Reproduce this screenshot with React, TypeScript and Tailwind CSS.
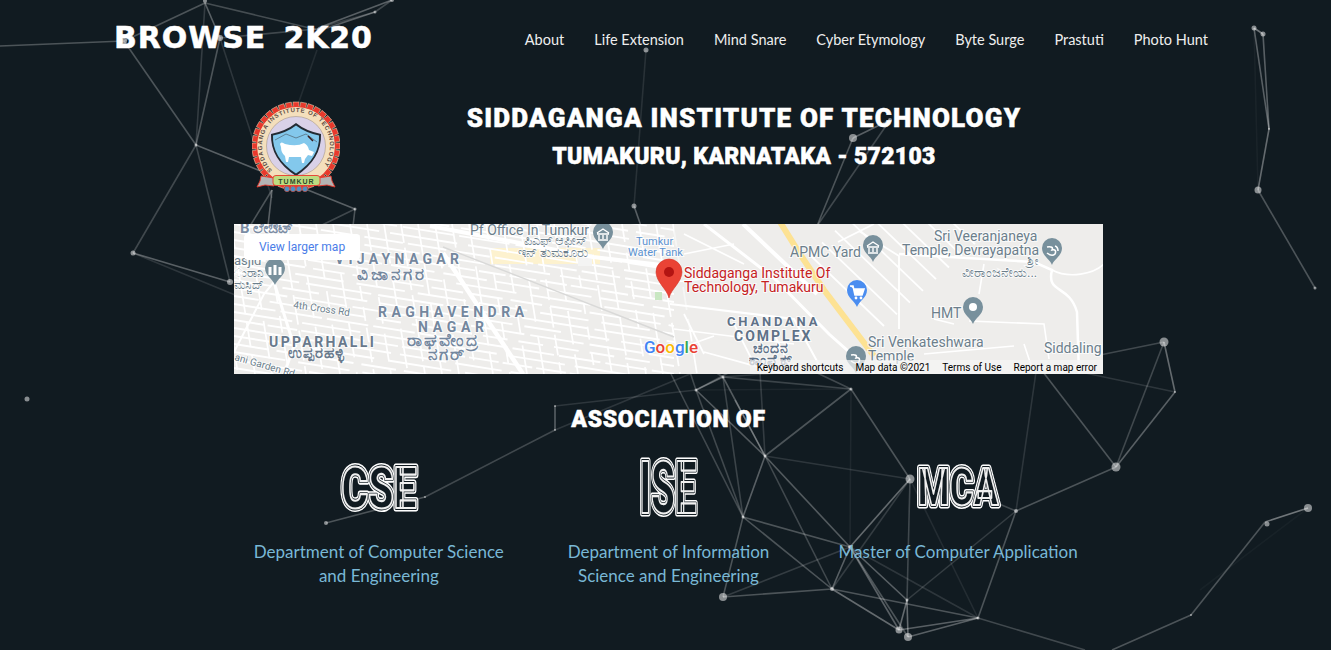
const L: number[][] = [
[0,46,124,41,.25],[124,41,205,3,.25],[205,3,220,38,.3],[205,3,196,145,.15],[220,38,196,145,.25],[124,41,196,145,.25],[196,145,133,253,.2],[196,145,230,282,.18],[196,145,355,209,.3],[133,253,230,282,.3],[133,253,240,297,.12],[220,38,272,198,.12],[272,190,250,226,.25],[272,190,268,226,.3],[355,209,320,226,.2],[355,209,353,226,.25],[317,50,296,110,.08],
[205,3,318,30,.22],[220,38,327,28,.2],[318,28,392,0,.3],[327,28,375,12,.3],[318,28,375,12,.15],[392,0,375,12,.2],
[646,50,634,206,.1],[634,206,641,226,.3],[853,138,890,120,.3],[853,138,817,226,.25],[890,120,817,226,.2],
[1254,28,1263,34,.4],[1254,28,1269,129,.3],[1263,34,1269,129,.3],[1269,129,1258,190,.35],[1258,190,1315,288,.25],[1254,28,1258,190,.04],
[1100,355,1164,342,.2],[1164,342,1175,392,.35],[1175,392,1085,373,.12],[1175,392,1116,467,.3],[1164,342,1116,467,.2],[1116,467,1043,372,.25],[1116,467,1016,511,.25],[1016,511,1036,372,.12],[1016,511,978,618,.25],[1308,508,1265,522,.4],[1265,522,1191,615,.25],[1191,615,1112,650,.25],[978,618,1085,650,.2],[1308,508,1200,590,.03],
[765,456,851,389,.25],[765,456,910,479,.12],[765,456,743,517,.3],[765,456,850,547,.28],[765,456,832,589,.2],[910,479,851,389,.25],[910,479,850,547,.35],[910,479,832,589,.15],[850,547,832,589,.3],[850,547,723,597,.15],[743,517,850,547,.25],[743,517,832,589,.25],[743,517,723,597,.25],[723,597,832,589,.25],[832,589,899,630,.35],[832,589,978,618,.25],[850,547,899,630,.3],[850,547,908,637,.25],[850,547,907,600,.3],[907,600,899,630,.35],[907,600,908,637,.35],[899,630,978,618,.3],[908,637,978,618,.3],[910,479,907,600,.2],[907,600,1016,511,.15],[850,547,978,618,.12],[910,479,978,618,.08],[851,389,850,547,.06],[1016,511,973,493,.2],
[696,390,723,377,.3],[696,390,765,456,.28],[723,377,765,456,.28],[723,377,851,389,.18],[696,390,555,406,.12],[555,430,690,374,.12],[555,406,555,430,.3],[555,430,425,497,.2],[425,497,326,523,.25],[696,390,743,517,.2],[723,377,743,517,.18],[670,372,743,517,.2],[735,400,765,456,.2],[760,372,765,456,.15],[696,390,690,372,.2],[723,377,715,372,.2],[696,390,730,372,.2],[723,377,790,372,.12],[851,389,815,372,.2],[696,390,851,389,.05],
];
const N: number[][] = [[124,41,3],[205,1,2],[220,38,3],[196,145,1.5],[133,253,2.5],[230,282,3],[355,209,1.5],[375,12,1.5],[392,0,2],[318,29,1],[646,50,2.5],[634,206,2.5],[853,138,4],[890,120,2],[1254,28,2.5],[1263,34,2.5],[1269,129,1],[1258,190,3.5],[1315,288,1.5],[1164,342,4.5],[1175,392,1],[1116,467,4.5],[1016,511,2],[1308,508,4],[1267,524,2.5],[1191,615,1],[765,456,1.5],[743,517,1.5],[723,597,4],[910,479,4.5],[850,547,2],[832,589,2],[907,600,1.5],[978,618,1.5],[899,630,3.5],[908,637,4],[696,390,1.5],[723,377,1.5],[851,389,1.5],[555,406,1],[555,430,1],[425,497,1],[326,523,2],[27,399,2.5]];

function Network() {
  return (
    <svg className="absolute inset-0" width="1331" height="650" viewBox="0 0 1331 650">
      {L.map((l, i) => <line key={i} x1={l[0]} y1={l[1]} x2={l[2]} y2={l[3]} stroke="#fff" strokeOpacity={l[4]} strokeWidth="1.6" />)}
      {N.map((n, i) => <circle key={i} cx={n[0]} cy={n[1]} r={n[2]} fill="#fff" fillOpacity=".5" />)}
    </svg>
  );
}

function Emblem() {
  const teeth = Array.from({ length: 36 }, (_, i) => i * 10);
  return (
    <svg width="88" height="94" viewBox="0 0 88 94" className="mt-[2px] shrink-0">
      <defs>
        <path id="arc" d="M 21 70 A 34 34 0 1 1 67 70" fill="none" />
      </defs>
      {teeth.map((a) => <rect key={a} x="41" y="1" width="6" height="6" fill="#e8392c" stroke="#f4dfbc" strokeWidth=".5" transform={`rotate(${a} 44 45)`} />)}
      <circle cx="44" cy="45" r="39.5" fill="#f4dfbc" stroke="#e8392c" strokeWidth="1.2" />
      <circle cx="44" cy="45" r="29.5" fill="#d9d1e8" stroke="#9a8a7a" strokeWidth=".5" />
      <text fontFamily="'Liberation Sans', sans-serif" fontSize="6" fontWeight="700" fill="#5a4a42" letterSpacing=".8">
        <textPath href="#arc" startOffset="1">SIDDAGANGA INSTITUTE OF TECHNOLOGY</textPath>
      </text>
      <path d="M19 33 Q34 30 44 22 Q54 30 69 33 Q70 58 44 75 Q18 58 19 33Z" fill="#232b33" />
      <path d="M21 34.5 Q35 31.5 44 24.5 Q53 31.5 67 34.5 Q68 57 44 72.5 Q20 57 21 34.5Z" fill="#83c8ec" />
      <path d="M23 39 L34 33 L44 37 L54 33 L65 41" fill="none" stroke="#55707f" strokeWidth=".8" />
      <path d="M56 35 L61 40" stroke="#3a1a1a" strokeWidth="1.6" />
      <path d="M28 43 Q29 40 33 43 Q45 46 52 42 Q56 44 57 49 L62 51 L60 55 L56 54 L53 58 L52 62 L50 62 L49 56 L37 56 L36 61 L34 61 L33 55 Q29 52 29 46Z" fill="#fff" />
      <path d="M9 75 L22 77 L22 85 L13 84 L5 86 L8 80Z" fill="#b4b4b4" stroke="#e8392c" strokeWidth=".9" />
      <path d="M79 75 L66 77 L66 85 L75 84 L83 86 L80 80Z" fill="#b4b4b4" stroke="#e8392c" strokeWidth=".9" />
      <path d="M21 77 Q21 74.5 24 74.5 L65 74.5 Q68 74.5 68 77 L68 82 Q68 84.5 65 84.5 L24 84.5 Q21 84.5 21 82Z" fill="#bddc80" stroke="#e8392c" strokeWidth=".9" />
      <text x="44.5" y="82.5" textAnchor="middle" fontFamily="'Liberation Sans', sans-serif" fontSize="7" fontWeight="700" fill="#2f4a2a" letterSpacing="1">TUMKUR</text>
      {[35, 41, 47, 53].map((x) => <circle key={x} cx={x} cy="88" r="2.7" fill="#4d8fc4" stroke="#d94a3a" strokeWidth=".6" />)}
    </svg>
  );
}

function Pin({ x, y, fill = "#78909c", children }: { x: number; y: number; fill?: string; children?: React.ReactNode }) {
  return (
    <g transform={`translate(${x} ${y})`}>
      <path d="M0 14 C-2 8 -10 5 -10 -3 A10 10 0 1 1 10 -3 C10 5 2 8 0 14Z" fill={fill} />
      {children}
    </g>
  );
}

const roadFont = "Roboto, 'Noto Sans', sans-serif";
function T({ x, y, s = 14, c = "#6c7f8c", w = 400, ls = 0, rot, children }: { x: number; y: number; s?: number; c?: string; w?: number; ls?: number; rot?: number; children: React.ReactNode }) {
  return (
    <text x={x} y={y} fontSize={s} fill={c} fontWeight={w} letterSpacing={ls} fontFamily={roadFont} stroke="#fff" strokeWidth="2" strokeOpacity=".75" paintOrder="stroke" transform={rot ? `rotate(${rot} ${x} ${y})` : undefined}>
      {children}
    </text>
  );
}

function GMap() {
  const h = Array.from({ length: 30 }, (_, i) => -80 + i * 8);
  const v = Array.from({ length: 28 }, (_, i) => -20 + i * 17);
  const d = Array.from({ length: 8 }, (_, i) => i * 13);
  return (
    <div className="relative h-[150px] w-[869px] overflow-hidden bg-[#eeedeb]">
      <svg className="absolute inset-0" width="869" height="150" viewBox="0 0 869 150">
        <rect x="256" y="24" width="110" height="16" fill="#fdf2cf" />
        {h.map((y, i) => <line key={i} x1="0" y1={y} x2="440" y2={y + 70} stroke="#fff" strokeWidth="1.9" strokeDasharray={`${24 + ((i * 17) % 46)} ${4 + ((i * 5) % 11)}`} />)}
        {v.map((x, i) => <line key={i} x1={x} y1="0" x2={x + 24} y2="150" stroke="#fff" strokeWidth="1.7" strokeDasharray={`${12 + ((i * 13) % 34)} ${5 + ((i * 3) % 11)}`} />)}
        <path d="M440 0 H869 V150 H600 L440 100Z" fill="#eeedeb" opacity=".5" />
        <line x1="209" y1="23" x2="440" y2="113" stroke="#d9d9d8" strokeWidth="1.4" />
        <rect x="421" y="68" width="7" height="8" fill="#c9e7c2" />
        <rect x="344" y="30" width="14" height="12" fill="#f4f4f3" />
        <path d="M196 2 L359 33 L436 42" fill="none" stroke="#fff" strokeWidth="4" />
        <path d="M209 29 L289 150" fill="none" stroke="#fff" strokeWidth="4.5" />
        <path d="M40 58 L60 122 L50 150" fill="none" stroke="#fff" strokeWidth="3" />
        <path d="M0 128 L30 70 L40 58" fill="none" stroke="#fff" strokeWidth="2" />
        <path d="M436 80 L560 95 L590 150" fill="none" stroke="#fff" strokeWidth="2" />
        <path d="M470 0 L540 54 L595 110 L640 150" fill="none" stroke="#fff" strokeWidth="3" />
        <path d="M509 0 L583 70" fill="none" stroke="#fff" strokeWidth="4" />
        <path d="M440 58 L520 50 M450 30 L500 20 M440 105 L560 120 M470 128 L550 150 M430 130 L480 112 M450 10 L510 40 M450 90 L470 130 M500 100 L520 140 M540 110 L560 150" fill="none" stroke="#fff" strokeWidth="1.7" />
        <path d="M546 -2 L566 30 L590 66 L640 132" fill="none" stroke="#fde293" strokeWidth="6" />
        {d.map((o) => <line key={o} x1={575 + o} y1={30 - o * 0.9} x2={650 + o} y2={102 - o * 0.9} stroke="#fff" strokeWidth="1.8" />)}
        <path d="M625 7 L665 32 L665 105 M604 18 L640 0" fill="none" stroke="#fff" strokeWidth="1.8" />
        <path d="M665 30 L800 38 L818 46 C812 70 835 60 843 88 L845 150" fill="none" stroke="#fff" strokeWidth="2.5" />
        <path d="M818 46 C835 55 860 50 870 40 M745 70 L750 40 M700 95 L720 100 M735 97 L810 100 L815 135 M790 120 L800 150 M690 130 L780 122" fill="none" stroke="#fff" strokeWidth="1.6" />

        <T x={236} y={11}>Pf Office In Tumkur</T>
        <T x={290} y={21} s={13}>ಪಿಎಫ್ ಆಫೀಸ್</T>
        <T x={284} y={33} s={13}>ಇನ್ ತುಮಕೂರು</T>
        <T x={402} y={21} s={11} c="#5d93d0">Tumkur</T>
        <T x={394} y={32} s={11} c="#5d93d0">Water Tank</T>
        <T x={556} y={33}>APMC Yard</T>
        <T x={700} y={17}>Sri Veeranjaneya</T>
        <T x={668} y={31}>Temple, Devrayapatna</T>
        <T x={793} y={41} s={12}>ಶ್ರೀ</T>
        <T x={728} y={53} s={13}>ವೀರಾಂಜನೇಯ...</T>
        <T x={697} y={94}>HMT</T>
        <T x={634} y={123}>Sri Venkateshwara</T>
        <T x={634} y={137}>Temple</T>
        <T x={810} y={129}>Siddaling</T>
        <T x={6} y={9} s={15} w={700} c="#7a8ca3">B ಲೇಔಟ್</T>
        <T x={101} y={40} s={14} w={700} c="#74879e" ls={4.3}>VIJAYNAGAR</T>
        <T x={123} y={56} s={17} w={700} c="#74879e" ls={3}>ವಿಜಾನಗರ</T>
        <T x={144} y={93} s={14} w={700} c="#74879e" ls={4.5}>RAGHAVENDRA</T>
        <T x={184} y={108} s={14} w={700} c="#74879e" ls={4.7}>NAGAR</T>
        <T x={173} y={122} s={17} w={700} c="#74879e" ls={2}>ರಾಘವೇಂದ್ರ</T>
        <T x={194} y={136} s={17} w={700} c="#74879e" ls={2}>ನಗರ್</T>
        <T x={35} y={123} s={14} w={700} c="#68798c" ls={2.4}>UPPARHALLI</T>
        <T x={54} y={134} s={15} w={700} c="#68798c" ls={1}>ಉಪ್ಪರಹಳ್ಳಿ</T>
        <T x={493} y={102} s={13} w={700} c="#5f7288" ls={2.8}>CHANDANA</T>
        <T x={500} y={117} s={14} w={700} c="#5f7288" ls={2}>COMPLEX</T>
        <T x={519} y={129} s={14} w={700} c="#5f7288" ls={1}>ಚಂದನ</T>
        <T x={515} y={141} s={14} w={700} c="#5f7288" ls={1}>ಕಾಂಪ್ಲೆಕ್ಸ್</T>
        <T x={59} y={84} s={10} rot={8}>4th Cross Rd</T>
        <T x={0} y={136} s={10} rot={16}>ani Garden Rd</T>
        <T x={0} y={41} s={13}>asjid</T>
        <T x={0} y={53} s={12}>ುರಾನಿ</T>
        <T x={0} y={65} s={12}>ಮಸ್ಜಿದ್</T>

        <Pin x={369} y={11}><path d="M-6 -1 H6 M-5 5 H5 M-4 0 V4 M0 0 V4 M4 0 V4 M-6 -2 L0 -6 L6 -2" stroke="#fff" strokeWidth="1.4" fill="none" /></Pin>
        <Pin x={41} y={47}><path d="M-5 4 V-4 M0 4 V-6 M5 4 V-4" stroke="#fff" strokeWidth="3" fill="none" /></Pin>
        <Pin x={639} y={24}><path d="M-6 -1 H6 M-5 5 H5 M-4 0 V4 M0 0 V4 M4 0 V4 M-6 -2 L0 -6 L6 -2" stroke="#fff" strokeWidth="1.4" fill="none" /></Pin>
        <Pin x={818} y={27}><path d="M-5 -4 Q2 -5 0 -1 Q5 -2 3 3 Q0 6 -5 2 M3 -5 Q6 -4 6 0" stroke="#fff" strokeWidth="1.6" fill="none" /></Pin>
        <Pin x={739} y={86}><circle r="4" cy="-3" fill="#fff" /></Pin>
        <Pin x={622} y={135}><path d="M-5 -4 Q2 -5 0 -1 Q5 -2 3 3 Q0 6 -5 2" stroke="#fff" strokeWidth="1.6" fill="none" /></Pin>
        <Pin x={623} y={69} fill="#4a8df0"><path d="M-7 -7 H-4 L-2 2 H5 L7 -4 H-3" stroke="#fff" strokeWidth="1.6" fill="#fff" /><circle cx="-1" cy="5" r="1.4" fill="#fff" /><circle cx="4" cy="5" r="1.4" fill="#fff" /></Pin>

        <g transform="translate(435 50)">
          <path d="M0 24 C-2 15 -13 8 -13 -2 A13 13 0 1 1 13 -2 C13 8 2 15 0 24Z" fill="#ea4335" stroke="#d33426" strokeWidth=".6" />
          <circle cy="-2" r="5" fill="#b31412" />
        </g>
        <T x={450} y={54} c="#c5221f">Siddaganga Institute Of</T>
        <T x={450} y={68} c="#c5221f">Technology, Tumakuru</T>

        <text x={410} y={129} fontSize="17" fontWeight="500" fontFamily={roadFont} stroke="#fff" strokeWidth="2" strokeOpacity=".8" paintOrder="stroke">
          <tspan fill="#4285f4">G</tspan><tspan fill="#ea4335">o</tspan><tspan fill="#fbbc05">o</tspan><tspan fill="#4285f4">g</tspan><tspan fill="#34a853">l</tspan><tspan fill="#ea4335">e</tspan>
        </text>
      </svg>
      <div className="absolute left-[10px] top-[10px] flex h-[26px] w-[116px] items-center justify-center rounded-sm bg-white font-['Roboto',sans-serif] text-[12px] text-[#4a7de8]">View larger map</div>
      <div className="absolute bottom-0 right-0 flex h-[14px] w-[353px] items-center justify-end gap-3 bg-[#f5f5f5]/70 pr-[6px] font-['Roboto',sans-serif] text-[10px] text-black">
        <span>Keyboard shortcuts</span><span>Map data ©2021</span><span>Terms of Use</span><span>Report a map error</span>
      </div>
    </div>
  );
}

function OutlineWord({ text, w, h, len, size }: { text: string; w: number; h: number; len: number; size: number }) {
  const common = { x: w / 2, y: h / 2 + size * 0.355, textAnchor: "middle" as const, fontSize: size, fontWeight: 900, fontFamily: "Roboto, sans-serif", textLength: len, lengthAdjust: "spacingAndGlyphs" as const, strokeLinejoin: "round" as const };
  return (
    <svg width={w} height={h} viewBox={`0 0 ${w} ${h}`} className="blur-[0.6px]">
      <text {...common} fill="#fff" stroke="#fff" strokeWidth="7">{text}</text>
      <text {...common} fill="#111b21" stroke="#111b21" strokeWidth="3.8" aria-hidden="true">{text}</text>
      <text {...common} fill="#111b21" stroke="#f0f0f0" strokeWidth="2.2" aria-hidden="true">{text}</text>
    </svg>
  );
}

const nav = ["About", "Life Extension", "Mind Snare", "Cyber Etymology", "Byte Surge", "Prastuti", "Photo Hunt"];

export default function App() {
  return (
    <div className="relative h-[650px] w-full overflow-hidden bg-[#111b21]">
      <Network />
      <div className="relative flex h-[650px] flex-col">
        <header className="flex h-[80px] items-start justify-between pl-[114px] pr-[123px]">
          <div className="mt-[19px] font-['DejaVu_Sans',sans-serif] text-[30px] font-bold leading-[38px] tracking-[0.9px] text-white [-webkit-text-stroke:0.5px_white] [word-spacing:6px]">BROWSE 2K20</div>
          <nav className="mt-[28px] flex gap-[30px] font-['Lato',sans-serif] text-[14.5px] leading-6 text-[#eeeeee]">
            {nav.map((n) => <a key={n}>{n}</a>)}
          </nav>
        </header>
        <main className="mx-[234px] flex w-[869px] flex-col">
          <section className="flex h-[144px] items-start pl-[18px] pt-[19px]">
            <Emblem />
            <div className="ml-[104px] w-[600px] text-center font-['Roboto',sans-serif] font-black text-white [-webkit-text-stroke:0.5px_white]">
              <h1 className="text-[26px] leading-[38px] tracking-[1.2px]">SIDDAGANGA INSTITUTE OF TECHNOLOGY</h1>
              <h2 className="mt-[1px] text-[23px] leading-[38px] tracking-[0.3px]">TUMAKURU, KARNATAKA - 572103</h2>
            </div>
          </section>
          <GMap />
          <h3 className="mt-[31px] text-center font-['Roboto',sans-serif] text-[23px] font-black leading-[30px] tracking-[0.7px] text-white [-webkit-text-stroke:0.5px_white]">ASSOCIATION OF</h3>
          <div className="mt-[20px] grid grid-cols-3 text-center font-['Lato',sans-serif] text-[17px] font-normal leading-6 text-[#79b8d6]">
            <div className="flex flex-col items-center">
              <OutlineWord text="CSE" w={100} h={64} len={75} size={58} />
              <p className="mt-[21px]">Department of Computer Science<br />and Engineering</p>
            </div>
            <div className="flex flex-col items-center">
              <OutlineWord text="ISE" w={100} h={64} len={57} size={72} />
              <p className="mt-[21px]">Department of Information<br />Science and Engineering</p>
            </div>
            <div className="flex flex-col items-center">
              <OutlineWord text="MCA" w={100} h={64} len={81} size={52} />
              <p className="mt-[21px]">Master of Computer Application</p>
            </div>
          </div>
        </main>
      </div>
    </div>
  );
}
